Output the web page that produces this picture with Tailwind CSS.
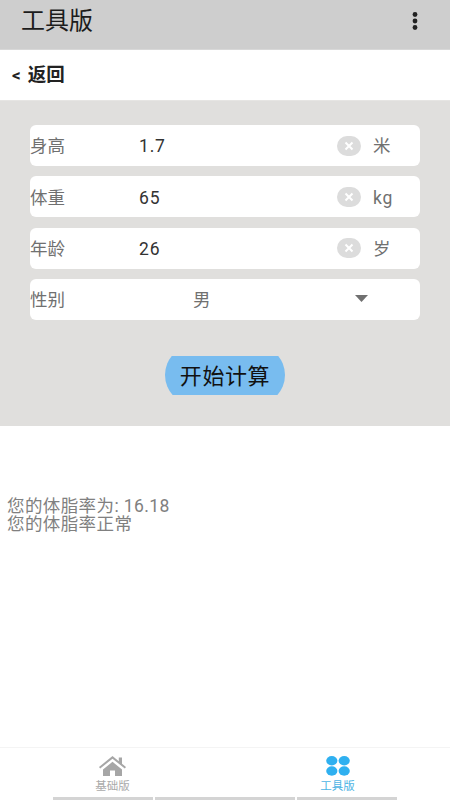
<!DOCTYPE html>
<html lang="zh">
<head>
<meta charset="utf-8">
<script src="https://cdn.jsdelivr.net/npm/@tailwindcss/browser@4"></script>
</head>
<body class="bg-white">
<div class="w-[450px] h-[800px] overflow-hidden flex flex-col bg-white font-['Roboto','Noto_Sans_CJK_SC',sans-serif]">
  <header class="h-[50px] shrink-0 bg-[#cecece] flex items-center justify-between pl-[21px] pr-[32px] border-b border-[#d8d8d8]">
    <span class="text-[24px] leading-none text-[#1c1c1c] mt-[-7px]">工具版</span>
    <svg class="mt-[-8px]" width="6" height="18" viewBox="0 0 6 18" fill="#222"><circle cx="3" cy="2.500" r="2.400"/><circle cx="3" cy="9" r="2.400"/><circle cx="3" cy="15.500" r="2.400"/></svg>
  </header>
  <div class="h-[50px] shrink-0 flex items-center gap-[7px] pl-[12px] pt-[2px] text-[18.5px] font-bold text-[#222]"><span class="text-[17px]">&lt;</span><span>返回</span></div>
  <section class="h-[326px] shrink-0 bg-[#e0dfdd] border-t border-[#e6e5e3] pt-[24px] px-[30px] flex flex-col">
    <div class="flex flex-col gap-[10.25px]">
      <div class="h-[41px] bg-white rounded-[6px] flex items-center text-[17.5px] text-[#707070]">
        <span class="w-[109px] pt-[2px]">身高</span>
        <span class="flex-1 pt-[2px] text-[#333] tracking-[0.8px]">1.7</span>
        <span class="w-[24px] h-[20px] rounded-full bg-[#dcdcdc] flex items-center justify-center mr-[12px]">
          <svg width="12" height="12" viewBox="0 0 12 12" stroke="#fff" stroke-width="2"><path d="M2.500 2.500l7 7M9.500 2.500l-7 7"/></svg>
        </span>
        <span class="w-[47px] pt-[2px]">米</span>
      </div>
      <div class="h-[41px] bg-white rounded-[6px] flex items-center text-[17.5px] text-[#707070]">
        <span class="w-[109px] pt-[2px]">体重</span>
        <span class="flex-1 pt-[2px] text-[#333] tracking-[0.8px]">65</span>
        <span class="w-[24px] h-[20px] rounded-full bg-[#dcdcdc] flex items-center justify-center mr-[12px]">
          <svg width="12" height="12" viewBox="0 0 12 12" stroke="#fff" stroke-width="2"><path d="M2.500 2.500l7 7M9.500 2.500l-7 7"/></svg>
        </span>
        <span class="w-[47px] pt-[2px] tracking-[0.8px]">kg</span>
      </div>
      <div class="h-[41px] bg-white rounded-[6px] flex items-center text-[17.5px] text-[#707070]">
        <span class="w-[109px] pt-[2px]">年龄</span>
        <span class="flex-1 pt-[2px] text-[#333] tracking-[0.8px]">26</span>
        <span class="w-[24px] h-[20px] rounded-full bg-[#dcdcdc] flex items-center justify-center mr-[12px]">
          <svg width="12" height="12" viewBox="0 0 12 12" stroke="#fff" stroke-width="2"><path d="M2.500 2.500l7 7M9.500 2.500l-7 7"/></svg>
        </span>
        <span class="w-[47px] pt-[2px]">岁</span>
      </div>
      <div class="h-[41px] bg-white rounded-[6px] flex items-center text-[17.5px] text-[#707070]">
        <span class="w-[163px] pt-[2px]">性别</span>
        <span class="flex-1 pt-[2px]">男</span>
        <svg class="mr-[52px] mt-[-2px]" width="13" height="7" viewBox="0 0 13 7" fill="#707070"><path d="M0 0h13L6.500 7z"/></svg>
      </div>
    </div>
    <div class="mt-[36px] mx-auto w-[120px] h-[39px] overflow-hidden flex items-center">
      <div class="w-[120px] h-[60px] shrink-0 pt-[2px] rounded-full bg-[#78bcef] flex items-center justify-center text-[22px] text-[#111] tracking-[0.6px]">开始计算</div>
    </div>
  </section>
  <main class="flex-1 pt-[71px] pl-[7px] text-[17.5px] leading-[18px] text-[#808080] tracking-[0.4px]">
    <p>您的体脂率为: 16.18</p>
    <p>您的体脂率正常</p>
  </main>
  <nav class="h-[53px] shrink-0 border-t border-[#f4f4f4] relative flex text-[11.5px] leading-none">
    <div class="w-[225px] flex flex-col items-center pt-[8px]">
      <svg width="27" height="20" viewBox="0 0 27 20" fill="#a6a6a6"><path d="M13.500 0L0 11l1.200 1.400L13.500 2.800l12.300 9.600L27 11l-4-3.200V1.500h-3.200v3.800z"/><path d="M4 13.500L13.500 5.800 23 13.500V20h-7v-5.500h-5V20H4z"/></svg>
      <span class="mt-[5px] text-[#aaa]">基础版</span>
    </div>
    <div class="w-[225px] flex flex-col items-center pt-[8px]">
      <svg width="24" height="20" viewBox="0 0 24 20" fill="#2fb0f0"><ellipse cx="5.800" cy="4.700" rx="5.600" ry="4.700"/><ellipse cx="18.200" cy="4.700" rx="5.600" ry="4.700"/><ellipse cx="5.800" cy="15" rx="5.600" ry="4.700"/><ellipse cx="18.200" cy="15" rx="5.600" ry="4.700"/></svg>
      <span class="mt-[5px] text-[#4db4e4]">工具版</span>
    </div>
    <div class="absolute left-[53px] bottom-0 w-[344px] h-[3px] flex gap-[2px]">
      <div class="w-[100px] bg-[#d4d4d4]"></div>
      <div class="w-[140px] bg-[#d4d4d4]"></div>
      <div class="flex-1 bg-[#d4d4d4]"></div>
    </div>
  </nav>
</div>
</body>
</html>
